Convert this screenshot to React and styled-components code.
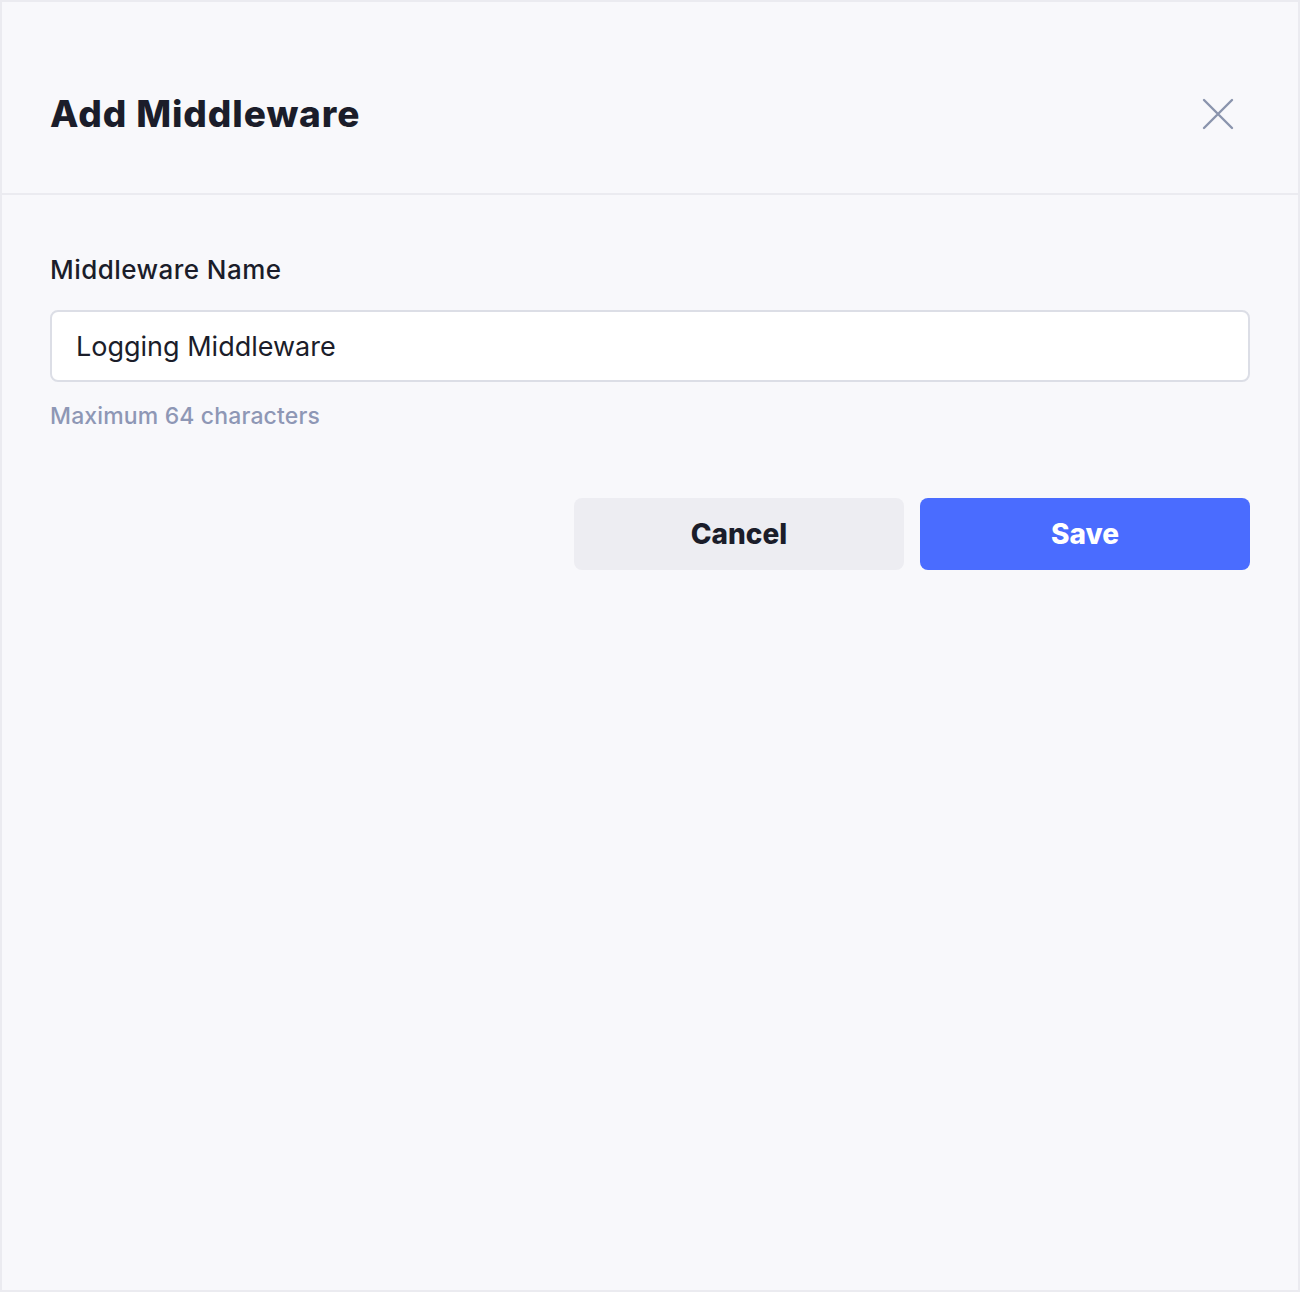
import React from "react";
import styled, { createGlobalStyle } from "styled-components";

const GlobalStyle = createGlobalStyle`
  html, body {
    margin: 0;
    padding: 0;
    background: #f8f8fb;
  }
  * {
    box-sizing: border-box;
  }
`;

const Dialog = styled.div`
  width: 1300px;
  height: 1292px;
  background: #f8f8fb;
  border: 2px solid #ebebf0;
  font-family: Inter, "Noto Sans", sans-serif;
  color: #1b1d2a;
  display: flex;
  flex-direction: column;
`;

const Header = styled.div`
  display: flex;
  align-items: center;
  justify-content: space-between;
  padding: 90px 48px 57px 48px;
  border-bottom: 2px solid #ebebf0;
`;

const Title = styled.h1`
  margin: 0;
  font-size: 37px;
  line-height: 44px;
  font-weight: 800;
  letter-spacing: 0.9px;
`;

const CloseButton = styled.button`
  width: 44px;
  height: 44px;
  border: none;
  background: none;
  padding: 0;
  display: flex;
  align-items: center;
  justify-content: center;
  color: #8a94ad;
  cursor: pointer;
  margin-right: 10px;
`;

const Body = styled.div`
  padding: 59px 48px 0 48px;
  display: flex;
  flex-direction: column;
`;

const Label = styled.label`
  font-size: 26px;
  line-height: 32px;
  font-weight: 500;
  letter-spacing: 0.45px;
  margin-bottom: 24px;
`;

const Input = styled.input`
  height: 72px;
  width: 100%;
  border: 2px solid #dcdee6;
  border-radius: 8px;
  background: #ffffff;
  padding: 0 24px;
  font-family: inherit;
  font-size: 27px;
  color: #1b1d2a;
  outline: none;
`;

const Helper = styled.div`
  margin-top: 18px;
  font-size: 23px;
  line-height: 32px;
  font-weight: 500;
  letter-spacing: 0.15px;
  color: #8e97b5;
`;

const Actions = styled.div`
  display: flex;
  justify-content: flex-end;
  gap: 16px;
  margin-top: 66px;
`;

const Button = styled.button`
  width: 330px;
  height: 72px;
  border: none;
  border-radius: 8px;
  font-family: inherit;
  font-size: 28px;
  font-weight: 800;
  cursor: pointer;
  background: ${p => (p.$primary ? "#4a6cff" : "#ededf2")};
  color: ${p => (p.$primary ? "#ffffff" : "#1b1d2a")};
`;

export default function App() {
  return (
    <>
      <GlobalStyle />
      <Dialog>
        <Header>
          <Title>Add Middleware</Title>
          <CloseButton aria-label="Close">
            <svg width="32" height="32" viewBox="0 0 32 32" fill="none">
              <path
                d="M2 2 L30 30 M30 2 L2 30"
                stroke="currentColor"
                strokeWidth="2.4"
                strokeLinecap="round"
              />
            </svg>
          </CloseButton>
        </Header>
        <Body>
          <Label htmlFor="mw-name">Middleware Name</Label>
          <Input id="mw-name" defaultValue="Logging Middleware" />
          <Helper>Maximum 64 characters</Helper>
          <Actions>
            <Button>Cancel</Button>
            <Button $primary>Save</Button>
          </Actions>
        </Body>
      </Dialog>
    </>
  );
}
